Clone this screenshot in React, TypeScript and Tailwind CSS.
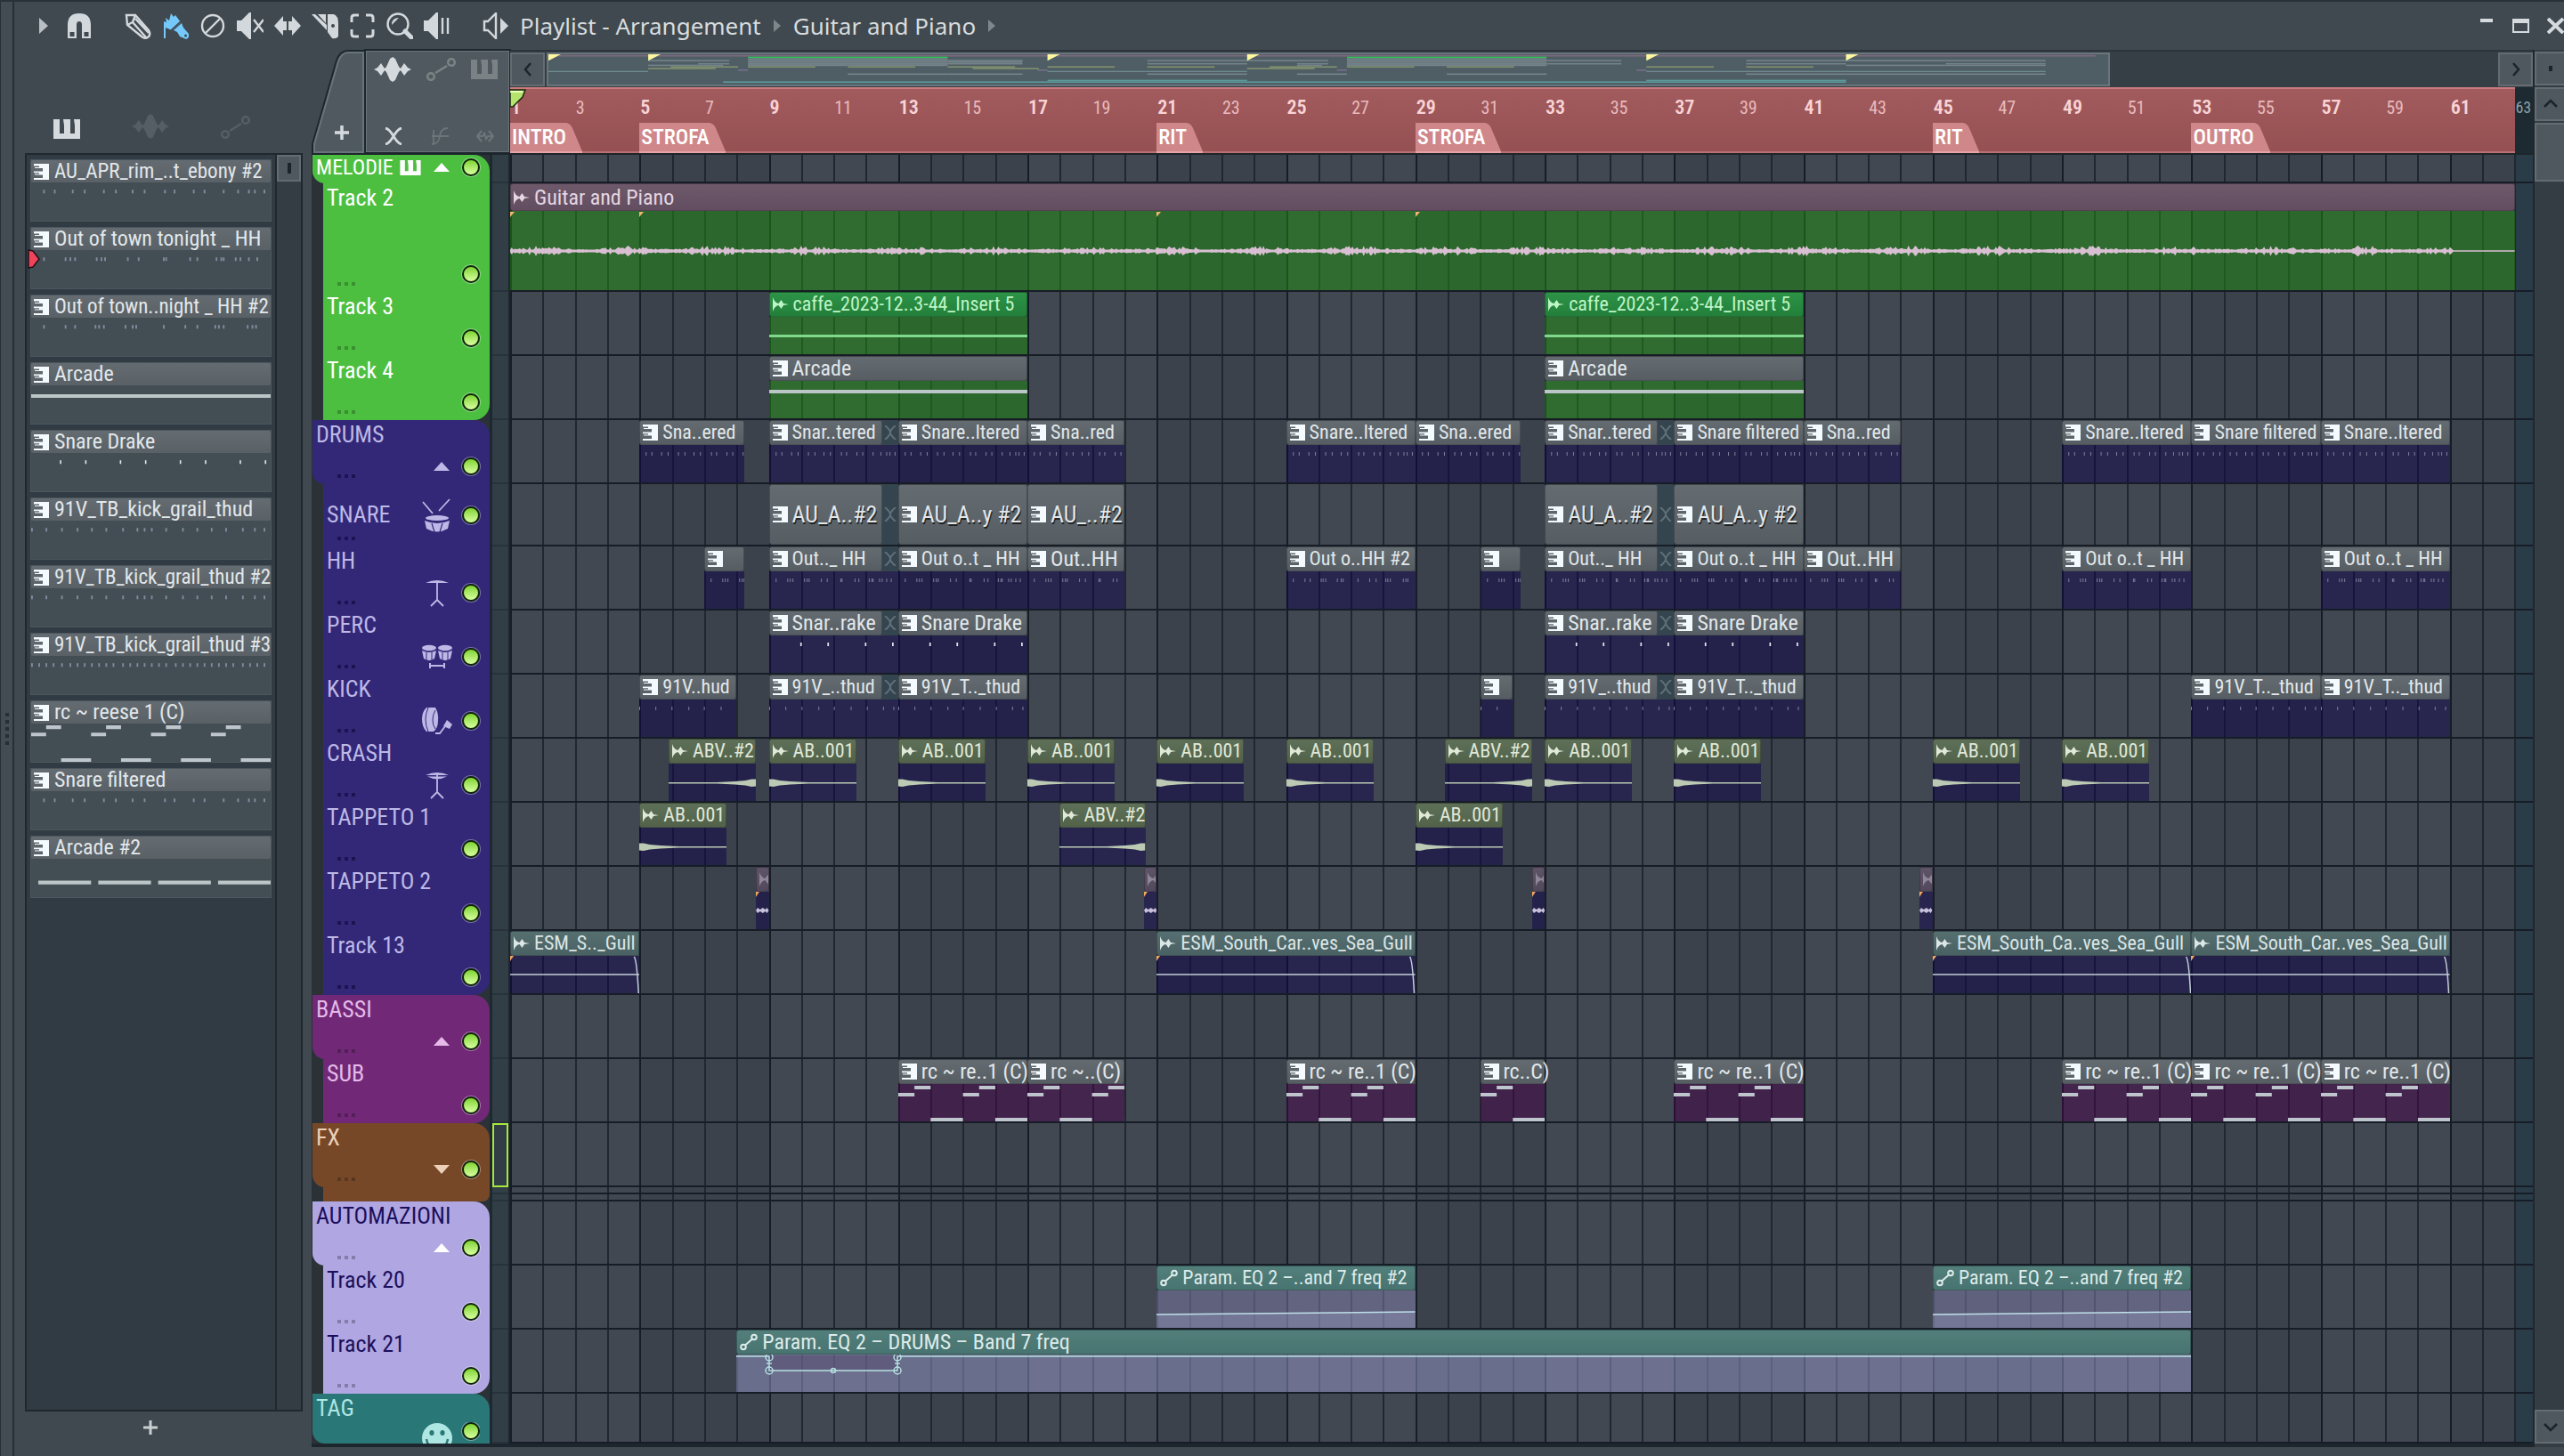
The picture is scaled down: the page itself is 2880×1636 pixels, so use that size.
import type { ReactNode } from "react"

type Kind = "pattern" | "audio" | "olive" | "teal" | "mauve" | "plum" | "auto"
type Art = "snare" | "hh" | "hh2" | "drake" | "kick" | "kick2" | "kick3" | "reese" | "arcade" | "arcade2" | "hit" | "swell" | "wave" | "gull" | "fx" | "caffe" | "ramp" | "band" | "none"

interface ClipData {
  bar: number
  len: number
  title: string
  kind: Kind
  art: Art
  overlap?: boolean
}

interface TrackData {
  name: string
  group: string
  height: string
  clips: ClipData[]
  parent?: boolean
  last?: boolean
  arrow?: "up" | "down"
  icon?: ReactNode
  mini?: number
  body?: string
  tall?: boolean
}

const TOTAL_BARS = 62.56

const pct = (bars: number) => `${(bars / TOTAL_BARS) * 100}%`

/* ---------- clip data ---------- */

const clip = (kind: Kind, art: Art) => (bar: number, len: number, title: string, overlap = false): ClipData => ({ bar, len, title, kind, art, overlap })

const snare = clip("pattern", "snare")
const rim = clip("pattern", "none")
const hh = clip("pattern", "hh")
const hh2 = clip("pattern", "hh2")
const drake = clip("pattern", "drake")
const kick = clip("pattern", "kick")
const hit = clip("olive", "hit")
const swell = clip("olive", "swell")
const fx = clip("mauve", "fx")
const gull = clip("teal", "gull")
const reese = clip("pattern", "reese")
const ramp = clip("auto", "ramp")

/* ---------- small icons ---------- */

const KeysSide = () => (
  <svg viewBox="0 0 17 18" className="h-[18px] w-[17px] shrink-0" fill="#f4fafd" aria-hidden="true">
    <path d="M0 0H17V18H0V16H10V12.5H1V11.5H6V10.2H0V8.4H10V5H1V4H6V2.4H0Z" />
  </svg>
)

const WaveSide = () => (
  <svg viewBox="0 0 18 16" className="h-4 w-[18px] shrink-0" fill="currentColor" aria-hidden="true">
    <path d="M0 0Q2 6 6.5 7L9.500 3L12 7L18 8L12 9L9.500 13L6.500 9Q2 10 0 16Z" />
  </svg>
)

const AutoSide = () => (
  <svg viewBox="0 0 20 20" className="h-5 w-5 shrink-0" fill="none" stroke="currentColor" strokeWidth="2" aria-hidden="true">
    <circle cx="4" cy="15.5" r="2.8" />
    <circle cx="16" cy="4.5" r="2.8" />
    <path d="M6 13.5L14 6.5" />
  </svg>
)

const Keys = ({ className }: { className: string }) => (
  <svg viewBox="0 0 30 22" className={className} fill="currentColor" aria-hidden="true">
    <path d="M0 0H7V16H12V7L11 0H19V16H24V7L23 0H30V22H0Z" />
  </svg>
)

const Wave = ({ className }: { className: string }) => (
  <svg viewBox="0 0 42 28" className={className} fill="currentColor" aria-hidden="true">
    <path d="M0 14L4 12L8 7L12 13L14 11L18 2L21 0L24 2L28 11L30 13L34 7L38 12L42 14L38 16L34 21L30 15L28 17L24 26L21 28L18 26L14 17L12 15L8 21L4 16Z" />
  </svg>
)

const Automation = ({ className }: { className: string }) => (
  <svg viewBox="0 0 34 26" className={className} fill="none" stroke="currentColor" strokeWidth="2.6" aria-hidden="true">
    <circle cx="5" cy="21" r="3.8" />
    <circle cx="28" cy="5" r="3.8" />
    <path d="M10 17L23 9" />
  </svg>
)

const DrumIcon = () => (
  <svg viewBox="0 0 36 38" className="h-[38px] w-9" fill="currentColor" aria-hidden="true">
    <path d="M2 4L13 17M32 1L20 14" stroke="currentColor" strokeWidth="1.8" />
    <ellipse cx="18" cy="22" rx="13" ry="3" />
    <path d="M4 25Q18 31 32 25L30 34Q18 41 6 34Z" />
    <path d="M12 28L15 38M24 28L21 38" stroke="#33297a" strokeWidth="1.2" />
  </svg>
)

const StandIcon = ({ double = false }: { double?: boolean }) => (
  <svg viewBox="0 0 36 32" className="h-8 w-9" fill="none" stroke="currentColor" strokeWidth="1.8" aria-hidden="true">
    <path d="M18 5V24M18 24L11 31M18 24L25 31" />
    <path d="M5 5Q18 -1 31 5Z" fill="currentColor" stroke="none" />
    {double && <path d="M7 6.500Q18 12 29 6.500Z" fill="currentColor" stroke="none" />}
  </svg>
)

const BongoIcon = () => (
  <svg viewBox="0 0 36 28" className="h-7 w-9" fill="currentColor" aria-hidden="true">
    <ellipse cx="9" cy="4" rx="8" ry="3.200" />
    <ellipse cx="27" cy="4" rx="8" ry="3.200" />
    <path d="M1 7Q9 11 17 7L15 16Q9 20 3 16ZM19 7Q27 11 35 7L33 16Q27 20 21 16Z" />
    <path d="M10 21V27M26 21V27M10 24H26" stroke="currentColor" strokeWidth="2" fill="none" />
    <path d="M6 9V18M12 9V18M24 9V18M30 9V18" stroke="#33297a" />
  </svg>
)

const KickIcon = () => (
  <svg viewBox="0 0 36 32" className="h-8 w-9" fill="currentColor" aria-hidden="true">
    <path d="M6 1H16Q20 8 19 16Q19 24 14 28H6Q1 23 1 14Q1 6 6 1Z" />
    <path d="M8 1Q5 8 5 14Q5 22 8 28M16 4Q13 9 13 15Q13 21 16 25" stroke="#33297a" fill="none" />
    <path d="M29 15L35 20L32 25L25 22Z" />
    <path d="M27 22L21 30H16" stroke="currentColor" strokeWidth="1.800" fill="none" />
  </svg>
)

const SmileIcon = () => (
  <svg viewBox="0 0 36 36" className="h-9 w-9" aria-hidden="true">
    <circle cx="18" cy="18" r="17" fill="currentColor" />
    <ellipse cx="12" cy="12" rx="2.600" ry="3" fill="#2a7778" />
    <ellipse cx="24" cy="12" rx="2.600" ry="3" fill="#2a7778" />
    <path d="M6 19Q8 30 18 30Q28 30 30 19" stroke="#2a7778" strokeWidth="2.400" fill="none" />
  </svg>
)

/* ---------- tracks ---------- */

const tracks: TrackData[] = [
  { name: "MELODIE", group: "melodie", height: "h-8", parent: true, arrow: "up", clips: [] },
  {
    name: "Track 2", group: "melodie", height: "h-[122px]", mini: 2, tall: true, body: "bg-[#1e8d0f]/50",
    clips: [{ bar: 1, len: 62, title: "Guitar and Piano", kind: "plum", art: "wave" }],
  },
  {
    name: "Track 3", group: "melodie", height: "h-18", mini: 4, body: "bg-[#1e8d0f]/50",
    clips: [9, 33].map((bar) => ({ bar, len: 8, title: "caffe_2023-12..3-44_Insert 5", kind: "audio", art: "caffe" })),
  },
  {
    name: "Track 4", group: "melodie", height: "h-18", mini: 6, last: true, body: "bg-[#1e8d0f]/50",
    clips: [9, 33].map((bar) => ({ bar, len: 8, title: "Arcade", kind: "pattern", art: "arcade" })),
  },
  {
    name: "DRUMS", group: "drums", height: "h-18", mini: 8, parent: true, arrow: "up",
    clips: [
      snare(5, 3.25, "Sna..ered"), snare(9, 4, "Snar..tered", true), snare(13, 4, "Snare..ltered"), snare(17, 3, "Sna..red"),
      snare(25, 4, "Snare..ltered"), snare(29, 3.25, "Sna..ered"), snare(33, 4, "Snar..tered", true), snare(37, 4, "Snare filtered"),
      snare(41, 3, "Sna..red"), snare(49, 4, "Snare..ltered"), snare(53, 4, "Snare filtered"), snare(57, 4, "Snare..ltered"),
    ],
  },
  {
    name: "SNARE", group: "drums", height: "h-[70px]", mini: 10, icon: <DrumIcon />,
    clips: [rim(9, 4, "AU_A..#2", true), rim(13, 4, "AU_A..y #2"), rim(17, 3, "AU_..#2"), rim(33, 4, "AU_A..#2", true), rim(37, 4, "AU_A..y #2")],
  },
  {
    name: "HH", group: "drums", height: "h-18", mini: 12, icon: <StandIcon />,
    clips: [
      hh(7, 1.25, ""), hh(9, 4, "Out.._ HH", true), hh(13, 4, "Out o..t _ HH"), hh(17, 3, "Out..HH"), hh2(25, 4, "Out o..HH #2"),
      hh(31, 1.25, ""), hh(33, 4, "Out.._ HH", true), hh(37, 4, "Out o..t _ HH"), hh(41, 3, "Out..HH"), hh(49, 4, "Out o..t _ HH"), hh(57, 4, "Out o..t _ HH"),
    ],
  },
  {
    name: "PERC", group: "drums", height: "h-18", mini: 13, icon: <BongoIcon />,
    clips: [drake(9, 4, "Snar..rake", true), drake(13, 4, "Snare Drake"), drake(33, 4, "Snar..rake", true), drake(37, 4, "Snare Drake")],
  },
  {
    name: "KICK", group: "drums", height: "h-18", mini: 14, icon: <KickIcon />,
    clips: [
      kick(5, 3, "91V..hud"), kick(9, 4, "91V_..thud", true), kick(13, 4, "91V_T.._thud"), kick(31, 1, ""),
      kick(33, 4, "91V_..thud", true), kick(37, 4, "91V_T.._thud"), kick(53, 4, "91V_T.._thud"), kick(57, 4, "91V_T.._thud"),
    ],
  },
  {
    name: "CRASH", group: "drums", height: "h-18", mini: 16, icon: <StandIcon double />,
    clips: [
      swell(5.9, 2.7, "ABV..#2"), hit(9, 2.7, "AB..001"), hit(13, 2.7, "AB..001"), hit(17, 2.7, "AB..001"), hit(21, 2.7, "AB..001"), hit(25, 2.7, "AB..001"),
      swell(29.9, 2.7, "ABV..#2"), hit(33, 2.7, "AB..001"), hit(37, 2.7, "AB..001"), hit(45, 2.7, "AB..001"), hit(49, 2.7, "AB..001"),
    ],
  },
  { name: "TAPPETO 1", group: "drums", height: "h-18", mini: 18, clips: [hit(5, 2.7, "AB..001"), swell(18, 2.65, "ABV..#2"), hit(29, 2.7, "AB..001")] },
  { name: "TAPPETO 2", group: "drums", height: "h-18", mini: 20, clips: [fx(8.6, 0.4, ""), fx(20.6, 0.4, ""), fx(32.6, 0.4, ""), fx(44.6, 0.4, "")] },
  {
    name: "Track 13", group: "drums", height: "h-18", mini: 22, last: true,
    clips: [gull(1, 4, "ESM_S.._Gull"), gull(21, 8, "ESM_South_Car..ves_Sea_Gull"), gull(45, 8, "ESM_South_Ca..ves_Sea_Gull"), gull(53, 8, "ESM_South_Car..ves_Sea_Gull")],
  },
  { name: "BASSI", group: "bassi", height: "h-18", parent: true, arrow: "up", clips: [] },
  {
    name: "SUB", group: "bassi", height: "h-18", mini: 25, last: true, body: "bg-[#46024b]/50",
    clips: [
      reese(13, 4, "rc ~ re..1 (C)"), reese(17, 3, "rc ~..(C)"), reese(25, 4, "rc ~ re..1 (C)"), reese(31, 2, "rc..C)"),
      reese(37, 4, "rc ~ re..1 (C)"), reese(49, 4, "rc ~ re..1 (C)"), reese(53, 4, "rc ~ re..1 (C)"), reese(57, 4, "rc ~ re..1 (C)"),
    ],
  },
  { name: "FX", group: "fx", height: "h-18", parent: true, arrow: "down", clips: [] },
  { name: "", group: "fx", height: "h-2", clips: [] },
  { name: "", group: "fx", height: "h-2", last: true, clips: [] },
  { name: "AUTOMAZIONI", group: "auto", height: "h-18", parent: true, arrow: "up", clips: [] },
  {
    name: "Track 20", group: "auto", height: "h-18", mini: 33, body: "bg-[#8480b0]/50",
    clips: [ramp(21, 8, "Param. EQ 2 –..and 7 freq #2"), ramp(45, 8, "Param. EQ 2 –..and 7 freq #2")],
  },
  {
    name: "Track 21", group: "auto", height: "h-18", mini: 35, last: true, body: "bg-[#989ace]/50",
    clips: [{ bar: 8, len: 45, title: "Param. EQ 2 – DRUMS – Band 7 freq", kind: "auto", art: "band" }],
  },
  { name: "TAG", group: "tag", height: "h-14", parent: true, icon: <SmileIcon />, clips: [] },
]

const groupStyle: Record<string, string> = {
  melodie: "bg-[#4dbf40] text-white",
  drums: "bg-[#332878] text-[#bdb8e6]",
  bassi: "bg-[#712977] text-[#e5b9e8]",
  fx: "bg-[#774828] text-[#ecd0ba]",
  auto: "bg-[#b0a7e2] text-[#1b0f5c]",
  tag: "bg-[#2a7778] text-[#aee6e2]",
}

const kindStyle: Record<Kind, string> = {
  pattern: "from-[#646c72] to-[#565e63] text-[#e2e7ea]",
  audio: "from-[#2c9347] to-[#237f3a] text-[#bdf5c6]",
  olive: "from-[#5f7058] to-[#52634a] text-[#e0e8d8]",
  teal: "from-[#566f70] to-[#4a6163] text-[#dbe6e6]",
  mauve: "from-[#5d5468] to-[#52495c] text-[#8f8699]",
  plum: "from-[#6e596b] to-[#624e60] text-[#e6d6e2]",
  auto: "from-[#537f7b] to-[#477370] text-[#dcebea]",
}

const miniColor: Record<Kind, string> = {
  pattern: "#75838a", audio: "#2fc458", olive: "#80926e", teal: "#7fa0a4", mauve: "#76708a", plum: "#7f6a7f", auto: "#5d9a9c",
}

/* note positions inside a four bar pattern, in percent */
const ticks: Partial<Record<Art, number[]>> = {
  snare: [5, 9.500, 17, 22, 30, 35, 42, 47, 55.500, 59.500, 67.500, 72, 80, 86, 90.500, 93, 97],
  hh: [5, 14, 16, 18, 27, 29, 30.500, 40, 44.500, 55, 56, 66, 69, 77, 79, 80, 85, 87, 90.500, 94],
  hh2: [5, 14, 18, 26.500, 28, 30, 39, 42, 43.500, 55, 64, 69, 76.500, 78, 80, 90, 92, 93.500],
  drake: [24, 45, 74, 95],
  kick: [0, 12.500, 25, 38, 50, 63, 75.500, 88, 96],
  kick2: [0, 6, 12.500, 19, 25, 31, 38, 44, 47, 50, 56, 63, 69, 75, 81, 88, 93, 97],
  kick3: [0, 3, 6, 9, 12.500, 16, 19, 22, 25, 28, 31, 34, 38, 41, 44, 47, 50, 53, 56, 60, 63, 66, 69, 72, 75, 78, 81, 84, 88, 91, 94, 97],
}

const wavePath = (() => {
  let top = ""
  let bottom = ""
  for (let i = 0; i <= 1200; i++) {
    const n = Math.abs(Math.sin(i * 12.9898) * 43758.5453) % 1
    const swellAmount = 0.6 + 0.4 * Math.sin(i / 9)
    const a = 1.4 + n * n * 5 * swellAmount
    top += `L${i} ${(10 - a).toFixed(1)}`
    bottom = `L${i} ${(10 + a).toFixed(1)}` + bottom
  }
  return `M0 10${top}L1202 9.200L1240 9.200L1240 10.800L1202 10.800${bottom}Z`
})()

function ClipArt({ art, len }: { art: Art; len: number }) {
  const w = len * 25
  const notes = ticks[art]
  const common = { preserveAspectRatio: "none", className: "block h-full w-full", "aria-hidden": true } as const
  if (notes) {
    const strong = art === "drake"
    const all = [...notes, ...notes.map((n) => n + 100)].filter((n) => n < w)
    return (
      <svg viewBox={`0 0 ${w} 42`} {...common}>
        {all.map((n) => <rect key={n} x={n} y="8" width={strong ? 1.2 : 0.7} height="4" fill={strong ? "#e3e6ee" : "#9a9fb5"} fillOpacity={strong ? 1 : 0.75} />)}
      </svg>
    )
  }
  if (art === "reese") {
    const steps = Array.from({ length: Math.ceil(w / 50) }, (_, i) => i * 50)
    return (
      <svg viewBox={`0 0 ${w} 42`} {...common} fill="#bfc5cd">
        {steps.map((s) => <path key={s} d={`M${s} 10h12.500v4h-12.500zM${s + 12.5} 2h12.500v4h-12.500zM${s + 25} 38h25v4h-25z`} />)}
      </svg>
    )
  }
  if (art === "arcade") return <div className="mt-[10px] h-1 bg-[#bcc6c8]" />
  if (art === "arcade2")
    return (
      <svg viewBox="0 0 100 42" {...common} fill="#bcc6c8">
        <path d="M3 24h22v4h-22zM28 24h22v4h-22zM53 24h22v4h-22zM78 24h22v4h-22z" />
      </svg>
    )
  if (art === "hit" || art === "swell")
    return (
      <svg viewBox="0 0 100 42" {...common} fill="#bccab4">
        {art === "hit" ? <path d="M0 17.500L5 17.500L12 19L24 20L45 21H100V22.500H45L24 23.500L12 24.500L5 26L0 25.500Z" /> : <path d="M100 17.500L95 17.500L88 19L76 20L55 21H0V22.500H55L76 23.500L88 24.500L95 26L100 25.500Z" />}
      </svg>
    )
  if (art === "wave")
    return (
      <div className="relative flex h-full items-center">
        <svg viewBox="0 0 1240 20" preserveAspectRatio="none" className="h-5 w-full" fill="#d8bfd2" aria-hidden="true">
          <path d={wavePath} />
        </svg>
        {[1, 5, 21, 29].map((b) => (
          <svg key={b} viewBox="0 0 5 6" className="absolute top-px h-1.5 w-[5px]" style={{ left: `${((b - 1) / len) * 100}%` }} fill="#f0b56e" aria-hidden="true">
            <path d="M0 0H5L0 6Z" />
          </svg>
        ))}
      </div>
    )
  if (art === "caffe") return <div className="mt-5 h-[3px] bg-[#7fd98c]" />
  if (art === "gull")
    return (
      <svg viewBox={`0 0 ${len * 36} 42`} {...common} fill="none" stroke="#c3cfd6" strokeWidth="1.500">
        <path d={`M0 21H${len * 36}M${len * 36 - 6} 1Q${len * 36 - 3} 4 ${len * 36 - 1} 42`} />
        <path d="M0 0H4L0 6Z" fill="#f0a55e" stroke="none" />
      </svg>
    )
  if (art === "fx")
    return (
      <svg viewBox="0 0 15 42" {...common}>
        <path d="M0 0H4L0 6Z" fill="#f0a55e" />
        <path d="M0 21L2 18L5 20L8 18L11 20L13 18L15 21L13 24L11 22L8 24L5 22L2 24Z" fill="#c7c0da" />
      </svg>
    )
  if (art === "ramp")
    return (
      <svg viewBox="0 0 290 42" {...common}>
        <path d="M0 27L290 24V42H0Z" fill="#aeb6e0" fillOpacity="0.25" />
        <path d="M0 27L290 24" stroke="#bfe0e8" strokeWidth="1.500" />
      </svg>
    )
  if (art === "band")
    return (
      <svg viewBox="0 0 1634 42" {...common} fill="none" stroke="#b5e0e0" strokeWidth="1.500">
        <path d="M37 1H181V17H37Z" fill="#4a3f63" fillOpacity="0.400" stroke="none" />
        <path d="M0 2H37V18H181V2H1634" />
        <circle cx="37" cy="18" r="4" />
        <circle cx="181" cy="18" r="4" />
        <circle cx="109" cy="18" r="2.500" />
        <circle cx="37" cy="3" r="4" />
        <circle cx="181" cy="3" r="4" />
        <path d="M34 10h6M178 10h6" />
      </svg>
    )
  return null
}

function ClipIcon({ kind }: { kind: Kind }) {
  if (kind === "pattern") return <KeysSide />
  if (kind === "auto") return <AutoSide />
  return <WaveSide />
}

function titleSize(title: string, art: Art, len: number) {
  if (art === "none") return "text-[26px] text-shadow-[1px_2px_0_#222]"
  if (art === "reese" || art === "drake") return "text-[24px]"
  if (len > 8 || title.length < 8) return "text-[24px]"
  return "text-[22px]"
}

function Clip({ data, track }: { data: ClipData; track: TrackData }) {
  const { bar, len, title, kind, art, overlap } = data
  const full = art === "none"
  const titleHeight = full ? "flex-1" : track.tall ? "h-[31px]" : "h-7"
  const size = kind === "olive" ? "text-[22px]" : titleSize(title, art, len)
  return (
    <div className="absolute inset-y-0 flex flex-col" style={{ left: pct(bar - 1), width: pct(len) }}>
      <div className={`flex ${titleHeight} shrink-0`}>
        <div className={`flex min-w-0 flex-1 items-center gap-[5px] rounded-[3px] border border-black/25 bg-linear-to-b pl-[3px] ${title ? "" : "overflow-hidden"} ${kindStyle[kind]}`}>
          <ClipIcon kind={kind} />
          {title && <span className={`whitespace-nowrap leading-[28px] ${size}`}>{title}</span>}
        </div>
        {overlap && (
          <div className="flex w-[12.5%] items-center justify-center overflow-hidden bg-[#34454f]">
            <svg viewBox="0 0 14 16" className="h-4 w-3.5" stroke="#5f7079" strokeWidth="2" fill="none" aria-hidden="true">
              <path d="M1 0Q7 5 7 8Q7 11 1 16M13 0Q7 5 7 8Q7 11 13 16" />
            </svg>
          </div>
        )}
      </div>
      {!full && (
        <div className={`min-h-0 flex-1 ${track.body ?? "bg-[#0e024c]/50"}`}>
          <ClipArt art={art} len={len} />
        </div>
      )}
    </div>
  )
}

function Led() {
  return (
    <button aria-label="Mute track" className="h-5 w-5 rounded-full border-2 border-[#10250c] bg-linear-to-b from-[#7fd42a] to-[#d8ff9c] ring-1 ring-white/35" />
  )
}

function Arrow({ dir, group }: { dir: "up" | "down"; group: string }) {
  return (
    <button aria-label="Collapse group" className={group === "auto" ? "text-white" : ""}>
      <svg viewBox="0 0 18 10" className="h-2.5 w-[18px]" fill="currentColor" aria-hidden="true">
        <path d={dir === "up" ? "M9 0L18 10H0Z" : "M0 0H18L9 10Z"} />
      </svg>
    </button>
  )
}

function TrackHeader({ track }: { track: TrackData }) {
  const { name, group, height, parent, last, arrow, icon } = track
  const shape = parent ? "rounded-tr-[18px] rounded-bl-[14px] pl-1" : "ml-3 pl-1"
  if (!name) return <div className={`${height} ml-3 ${groupStyle[group]} ${last ? "rounded-br-[14px]" : ""}`} />
  if (name === "MELODIE")
    return (
      <div className={`flex ${height} items-center justify-between ${shape} ${groupStyle[group]} pr-[11px] pb-1`}>
        <span className="text-[24px] leading-[28px]">{name}</span>
        <div className="flex items-center gap-3.5">
          <Keys className="h-[17px] w-6" />
          <Arrow dir="up" group={group} />
          <Led />
        </div>
      </div>
    )
  const centered = name === "SNARE"
  const dark = group === "drums" ? "bg-[#1d1352]" : "bg-black/25"
  return (
    <div className={`flex justify-between ${height} ${shape} ${groupStyle[group]} ${last ? "rounded-br-[18px]" : ""} pr-[11px]`}>
      <div className={`flex w-0 flex-col justify-between pb-[7px] ${centered ? "pt-[19px]" : "pt-px"}`}>
        <span className="whitespace-nowrap text-[26px] leading-[30px]">{name}</span>
        {name !== "TAG" && (
          <div className={`flex gap-1 ${parent ? "ml-6" : "ml-3"}`}>
            <i className={`h-1 w-1 shrink-0 ${dark}`} />
            <i className={`h-1 w-1 shrink-0 ${dark}`} />
            <i className={`h-1 w-1 shrink-0 ${dark}`} />
          </div>
        )}
      </div>
      <div className={`flex items-center ${arrow ? "gap-3.5" : "gap-2.5"} ${centered ? "self-center" : name === "TAG" ? "mt-8 h-6 items-start overflow-hidden" : "h-10 self-end"}`}>
        {icon}
        {arrow && <Arrow dir={arrow} group={group} />}
        <Led />
      </div>
    </div>
  )
}

/* ---------- picker ---------- */

const picker: { title: string; art: Art }[] = [
  { title: "AU_APR_rim_..t_ebony #2", art: "snare" },
  { title: "Out of town tonight _ HH", art: "hh" },
  { title: "Out of town..night _ HH #2", art: "hh2" },
  { title: "Arcade", art: "arcade" },
  { title: "Snare Drake", art: "drake" },
  { title: "91V_TB_kick_grail_thud", art: "kick2" },
  { title: "91V_TB_kick_grail_thud #2", art: "kick2" },
  { title: "91V_TB_kick_grail_thud #3", art: "kick3" },
  { title: "rc ~ reese 1 (C)", art: "reese" },
  { title: "Snare filtered", art: "snare" },
  { title: "Arcade #2", art: "arcade2" },
]

function Picker() {
  return (
    <aside className="flex w-[324px] shrink-0 flex-col pl-3">
      <div className="flex h-[116px] items-end gap-[58px] pb-[16px] pl-[32px]">
        <button aria-label="Patterns" className="text-[#d5dade]"><Keys className="h-[22px] w-[30px]" /></button>
        <button aria-label="Audio clips" className="text-[#555e64]"><Wave className="h-7 w-[42px]" /></button>
        <button aria-label="Automation clips" className="text-[#555e64]"><Automation className="h-[26px] w-[34px]" /></button>
      </div>
      <div className="flex flex-1 border-2 border-[#1f282e] bg-[#303b43]">
        <ul className="flex flex-1 flex-col gap-1.5 px-1 pt-[5px]">
          {picker.map(({ title, art }, i) => (
            <li key={title} className="relative h-[70px] border border-white/5 bg-[#434d54]">
              <button className="flex h-[25px] w-full items-center gap-1.5 rounded-[2px] bg-linear-to-b from-[#646c72] to-[#596166] pl-[3px] text-[#e2e7ea]">
                <KeysSide />
                <span className={`whitespace-nowrap leading-[25px] ${title.length > 24 || title.startsWith("AU") ? "text-[23px]" : "text-[24px]"}`}>{title}</span>
              </button>
              <div className="h-[43px]"><ClipArt art={art} len={art === "reese" ? 8 : art === "drake" ? 8 : 4} /></div>
              {i === 1 && (
                <svg viewBox="0 0 14 22" className="absolute top-6 -left-1 h-[22px] w-3.5" fill="#f0435c" stroke="#20151a" strokeWidth="1.500" aria-hidden="true">
                  <path d="M1 1L6 2L13 11L6 20L1 21Z" />
                </svg>
              )}
            </li>
          ))}
        </ul>
        <div className="w-[30px] border-l-2 border-[#1f282e] bg-[#343d44]">
          <div className="flex h-[30px] items-center justify-center border-2 border-[#646c72] bg-[#50585f]">
            <i className="h-3 w-1 bg-[#1c242a]" />
          </div>
        </div>
      </div>
      <div className="flex h-[40px] items-center justify-center pr-[30px] pb-1">
        <button aria-label="Add pattern" className="p-1 text-[#c9cfd3]">
          <svg viewBox="0 0 16 16" className="h-4 w-4" stroke="currentColor" strokeWidth="3" aria-hidden="true"><path d="M8 0V16M0 8H16" /></svg>
        </button>
      </div>
    </aside>
  )
}

/* ---------- toolbar ---------- */

const Tool = ({ label, className = "", children }: { label: string; className?: string; children: ReactNode }) => (
  <button aria-label={label} className={className}>
    <svg viewBox="0 0 30 30" className="h-[30px] w-[30px]" fill="currentColor" aria-hidden="true">{children}</svg>
  </button>
)

const stroke = { fill: "none", stroke: "currentColor", strokeWidth: 2.4 }

function Toolbar() {
  return (
    <header className="flex h-[54px] items-center pl-7 text-[#d3d8dc]">
      <button aria-label="Menu" className="mr-[20px]">
        <svg viewBox="0 0 10 18" className="h-[18px] w-2.5" fill="#b9bfc4" aria-hidden="true"><path d="M0 0L10 9L0 18Z" /></svg>
      </button>
      <Tool label="Snap">
        <path d="M2 29V14Q2 1 15 1Q28 1 28 14V29H18V14Q18 10 15 10Q12 10 12 14V29Z" />
        <path d="M4.500 22H9.500V27H4.500ZM20.500 22H25.500V27H20.500Z" fill="#40494f" />
      </Tool>
      <div className="ml-9 flex gap-3">
        <Tool label="Draw">
          <path d="M2 3L12 3L27 20Q30 25 26 28Q22 30 19 27L3 14ZM12 3L9 11L3 14M9 11L24 28M12 7L27 23" {...stroke} />
        </Tool>
        <Tool label="Paint" className="text-[#74c8fa]">
          <path d="M2 10L5 11L4 6L8 9L10 1L13 5L15 3L21 11L11 20L4 17V29H2ZM13 20L22 12L24 17L30 24Q31 29 27 30L20 27L17 22Z" />
          <path d="M10 20L21 10" stroke="#40494f" strokeWidth="1.500" />
          <circle cx="26.500" cy="26" r="1.500" fill="#40494f" />
        </Tool>
        <Tool label="Delete">
          <circle cx="15" cy="15" r="12" {...stroke} />
          <path d="M7 23L23 7" {...stroke} />
        </Tool>
        <Tool label="Mute">
          <path d="M0 9H5L14 0H16V30H14L5 21H0Z" />
          <path d="M19 8L30 22M30 8L19 22" {...stroke} />
        </Tool>
        <Tool label="Slip">
          <path d="M0 15L10 4V10H14V20H10V26ZM30 15L20 4V10H16V20H20V26Z" />
        </Tool>
        <Tool label="Slice">
          <path d="M0 2H4L17 14V20ZM7 2H16V12Z" />
          <path d="M18 2H25Q30 4 30 12V27Q28 30 23 29L18 22Z" />
          <circle cx="24" cy="15" r="2" fill="#40494f" />
        </Tool>
        <Tool label="Select">
          <path d="M3 11V6Q3 3 6 3H11M19 3H24Q27 3 27 6V11M27 19V24Q27 27 24 27H19M11 27H6Q3 27 3 24V19" {...stroke} strokeWidth={3} />
        </Tool>
        <Tool label="Zoom">
          <circle cx="13" cy="13" r="11.500" {...stroke} />
          <path d="M6 14Q6 6 14 6L10 10Z" />
          <path d="M21 21L28 28" stroke="currentColor" strokeWidth="5" strokeLinecap="round" />
        </Tool>
        <Tool label="Playback">
          <path d="M0 9H5L14 0H16V30H14L5 21H0Z" />
          <path d="M21 6V24M27 6V24" {...stroke} />
        </Tool>
      </div>
      <Tool label="Preview" className="ml-9">
        <path d="M2 10H6L15 1V29L6 20H2Z" {...stroke} />
        <path d="M20 6L29 15L20 24Z" />
      </Tool>
      <h1 className="ml-3 flex items-center gap-3.5 font-['Noto_Sans',sans-serif] text-[26px] leading-[34px] text-[#d8dcdf]">
        Playlist - Arrangement
        <Chevron />
        Guitar and Piano
        <Chevron />
      </h1>
      <div className="ml-auto flex items-center gap-5">
        <button aria-label="Minimize" className="flex h-4 w-4 items-start"><i className="h-1 w-3.5 bg-[#d5dade]" /></button>
        <button aria-label="Maximize" className="h-4 w-[19px] border-2 border-t-[5px] border-[#d5dade]" />
        <button aria-label="Close">
          <svg viewBox="0 0 19 18" className="h-[18px] w-[19px]" stroke="#d5dade" strokeWidth="4" aria-hidden="true"><path d="M1 1L18 17M18 1L1 17" /></svg>
        </button>
      </div>
    </header>
  )
}

const Chevron = () => (
  <svg viewBox="0 0 8 14" className="h-3.5 w-2" fill="#7f878c" aria-hidden="true"><path d="M0 0L8 7L0 14Z" /></svg>
)

/* ---------- arrangement top part ---------- */

function ControlPanel() {
  return (
    <div className="flex w-[223px] shrink-0">
      <div className="relative w-[60px]">
        <svg viewBox="0 0 60 116" preserveAspectRatio="none" className="block h-full w-full" aria-hidden="true">
          <path d="M1 116V106L28 12Q32 1 41 1H60V116Z" fill="#50595f" stroke="#1c262c" strokeWidth="2" />
          <path d="M3 115V106L30 13Q34 3 41 3H58V115Z" fill="none" stroke="#68737a" strokeWidth="2" />
        </svg>
        <button aria-label="Add track" className="absolute bottom-[11px] left-[22px] p-1 text-[#d5dade]">
          <svg viewBox="0 0 16 16" className="h-4 w-4" stroke="currentColor" strokeWidth="3.500" aria-hidden="true"><path d="M8 0V16M0 8H16" /></svg>
        </button>
      </div>
      <div className="flex flex-1 flex-col justify-between border-2 border-[#68737a] bg-[#50595f] pt-1.5 pr-3 pb-[7px] pl-2 outline-2 -outline-offset-1 outline-[#1c262c]">
        <div className="flex items-center justify-between">
          <button aria-label="Audio" className="text-[#d5dade]"><Wave className="h-7 w-[42px]" /></button>
          <button aria-label="Automation" className="text-[#7a8286]"><Automation className="h-[26px] w-[34px]" /></button>
          <button aria-label="Patterns" className="text-[#7a8286]"><Keys className="h-[22px] w-[30px]" /></button>
        </div>
        <div className="flex items-center justify-between pr-1 pl-3">
          <button aria-label="Crossfade" className="text-[#d5dade]">
            <svg viewBox="0 0 20 20" className="h-5 w-5" fill="none" stroke="currentColor" strokeWidth="2.800" aria-hidden="true"><path d="M1 1C9 2 11 18 19 19M19 1C11 2 9 18 1 19" /></svg>
          </button>
          <button aria-label="Fade" className="text-[#6c757a]">
            <svg viewBox="0 0 20 20" className="h-5 w-5" fill="none" stroke="currentColor" strokeWidth="1.800" aria-hidden="true"><path d="M1 19Q9 19 10 10Q11 1 19 1M3 3V19M1 10H20" /></svg>
          </button>
          <button aria-label="Stretch" className="text-[#6c757a]">
            <svg viewBox="0 0 20 14" className="h-3.5 w-5" fill="none" stroke="currentColor" strokeWidth="2.200" aria-hidden="true"><path d="M6 1L1 7L6 13M14 1L19 7L14 13M2 7H7L9 4L11 10L13 7H18" /></svg>
          </button>
        </div>
      </div>
    </div>
  )
}

const markers = [
  { bar: 1, name: "INTRO" },
  { bar: 5, name: "STROFA" },
  { bar: 21, name: "RIT" },
  { bar: 29, name: "STROFA" },
  { bar: 45, name: "RIT" },
  { bar: 53, name: "OUTRO" },
]

const NavButton = ({ label, path, className }: { label: string; path: string; className: string }) => (
  <button aria-label={label} className={`flex shrink-0 items-center justify-center border-2 border-[#646c72] bg-[#50585f] ${className}`}>
    <svg viewBox="0 0 16 16" className="h-4 w-4" fill="none" stroke="#1c242a" strokeWidth="2.500" aria-hidden="true"><path d={path} /></svg>
  </button>
)

function MiniMap() {
  return (
    <div className="flex h-[42px] items-center border-t-2 border-[#2c353b] bg-[#373f46]">
      <NavButton label="Scroll left" path="M11 1L5 8L11 15" className="h-[38px] w-[39px]" />
      <div className="ml-0.5 flex-1">
        <div className="h-[38px] w-[80.1%] border-2 border-[#68767c] bg-[#4f5d64]">
          <svg viewBox="0 0 62.5 38" preserveAspectRatio="none" className="block h-full w-full" aria-hidden="true">
            {tracks.flatMap((t) =>
              t.mini === undefined ? [] : t.clips.map((c) => (
                <rect key={`${t.name}${c.bar}`} x={c.bar - 1} y={t.mini! - 1} width={c.len} height={t.name === "PERC" || t.name === "Track 13" ? 1 : 1.8} fill={miniColor[c.kind]} />
              ))
            )}
            {markers.map((m) => <path key={m.bar} d={`M${m.bar - 1} 0h0.500l-0.500 8z`} fill="#fdf7a0" />)}
          </svg>
        </div>
      </div>
      <NavButton label="Scroll right" path="M5 1L11 8L5 15" className="h-[38px] w-[39px]" />
    </div>
  )
}

function Ruler() {
  return (
    <div className="relative flex h-[74px] overflow-hidden bg-[#1d2a32]">
      <div className="border-t-2 border-b-2 border-t-[#cc7b7d] border-b-[#bd6f72] bg-linear-to-b from-[#a25b5d] to-[#955053]" style={{ width: pct(62) }} />
      <ol className="absolute inset-0 flex pt-2.5">
        {Array.from({ length: 32 }, (_, i) => i * 2 + 1).map((n) => (
          <li key={n} className="shrink-0 pl-px leading-[26px]" style={{ width: n === 63 ? undefined : pct(2) }}>
            <span className={n % 4 === 1 ? "text-[22px] font-semibold text-[#f9d3d5]" : n === 63 ? "text-[18px] text-[#8aa0a6]" : "text-[20px] text-[#e9babd]"}>{n}</span>
          </li>
        ))}
      </ol>
      {markers.map(({ bar, name }) => (
        <div key={bar} className="absolute bottom-0 flex h-[34px] border-b-2 border-[#e8a3a5]" style={{ left: pct(bar - 1) }}>
          <span className="bg-[#cf8789] pl-0.5 text-[24px] leading-[32px] font-medium text-white">{name}</span>
          <svg viewBox="0 0 18 32" className="h-8 w-[18px]" fill="#cf8789" aria-hidden="true"><path d="M0 0Q5 1 7 6L18 32H0Z" /></svg>
        </div>
      ))}
      <svg viewBox="0 0 18 22" className="absolute top-0.5 left-0 h-[22px] w-[18px]" aria-hidden="true">
        <path d="M0 1H17L14 9L3 20H0Z" fill="#b5e36e" stroke="#1d2a12" strokeWidth="1.500" />
        <path d="M0 3H14" stroke="#e4ffb8" strokeWidth="2" />
      </svg>
    </div>
  )
}

/* ---------- lanes ---------- */

function Grid() {
  return (
    <div className="absolute inset-0 flex overflow-hidden" aria-hidden="true">
      {Array.from({ length: 63 }, (_, i) => (
        <div
          key={i}
          className={`shrink-0 border-l-2 ${i % 4 === 0 ? "border-[#161d27]" : "border-[#20272f]"} ${i === 62 ? "bg-[#2a3c47]" : (i >> 2) % 2 ? "bg-[#3b424b]" : "bg-[#424851]"}`}
          style={{ width: pct(1) }}
        />
      ))}
    </div>
  )
}

function Arrangement() {
  return (
    <section className="flex min-w-0 flex-1 flex-col">
      <div className="flex h-[116px]">
        <ControlPanel />
        <div className="flex min-w-0 flex-1 flex-col">
          <MiniMap />
          <Ruler />
        </div>
      </div>
      <div className="flex border-t-2 border-b-4 border-[#1c262c] bg-[#1c2930]">
        <div className="w-[203px] shrink-0 border-r-3 border-[#1c2930] bg-[#2a3238] pl-px">
          {tracks.map((t, i) => <TrackHeader key={i} track={t} />)}
        </div>
        <div className="w-5 shrink-0 border-r-2 border-[#1c262c] bg-[#323e46]">
          {tracks.map((t, i) => (
            <div key={i} className={`${t.height} ${t.name === "FX" ? "border-2 border-[#a6e83c]" : "border-b-2 border-[#27323a]"}`} />
          ))}
        </div>
        <div className="relative min-w-0 flex-1 overflow-hidden">
          <Grid />
          {tracks.map((t, i) => (
            <div key={i} className={`relative border-b-2 border-[#171d26] ${t.height}`}>
              {t.clips.map((c) => <Clip key={c.bar} data={c} track={t} />)}
            </div>
          ))}
        </div>
      </div>
    </section>
  )
}

function RightScroll() {
  return (
    <div className="flex w-[35px] shrink-0 flex-col border-l-2 border-[#1f282e] bg-[#343d44] pt-0.5">
      <div className="flex h-[38px] items-center justify-center border-2 border-r-0 border-[#646c72] bg-[#50585f]"><i className="h-1.5 w-1 bg-[#1c242a]" /></div>
      <NavButton label="Scroll up" path="M1 11L8 4L15 11" className="mt-0.5 h-[38px] border-r-0" />
      <div className="mt-0.5 h-[66px] border-2 border-r-0 border-[#646c72] bg-[#50585f]" />
      <NavButton label="Scroll down" path="M1 5L8 12L15 5" className="mt-auto mb-1 h-[38px] border-r-0" />
    </div>
  )
}

function App() {
  return (
    <main className="flex min-h-screen overflow-hidden border-t-2 border-[#2a3137] bg-[#40494f] font-['Roboto_Condensed','Noto_Sans',sans-serif]">
      <div className="flex w-4 shrink-0 flex-col items-center justify-center gap-1 border-r-2 border-l border-[#262f35] bg-[#434c52]">
        {[0, 1, 2, 3, 4].map((d) => <i key={d} className="h-1 w-1 bg-[#262f35]" />)}
      </div>
      <div className="flex min-w-0 flex-1 flex-col">
        <Toolbar />
        <div className="flex">
          <Picker />
          <div className="w-[10px] shrink-0" />
          <Arrangement />
          <RightScroll />
        </div>
      </div>
    </main>
  )
}

export default App
